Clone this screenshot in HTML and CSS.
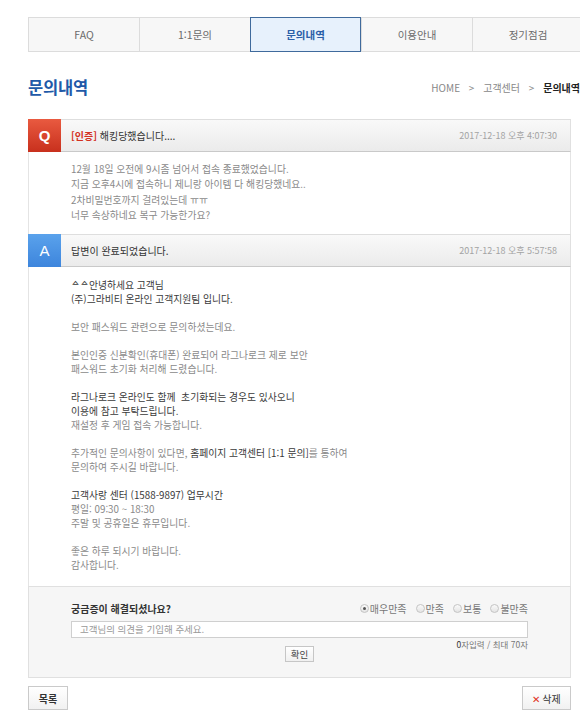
FILE: index.html
```
<!DOCTYPE html>
<html lang="ko">
<head>
<meta charset="utf-8">
<link rel="stylesheet" href="styles.css">
</head>
<body>
<div class="wrap">
  <ul class="tabs">
    <li class="tab">FAQ</li>
    <li class="tab">1:1문의</li>
    <li class="tab active">문의내역</li>
    <li class="tab">이용안내</li>
    <li class="tab">정기점검</li>
  </ul>

  <div class="title-row">
    <h2 class="title">문의내역</h2>
    <div class="crumb">HOME <span class="gt">&gt;</span> 고객센터 <span class="gt">&gt;</span> <b>문의내역</b></div>
  </div>

  <div class="board">
    <div class="head">
      <span class="badge q">Q</span>
      <span class="subject"><b class="tag">[인증]</b> 해킹당했습니다....</span>
      <span class="date">2017-12-18 오후 4:07:30</span>
    </div>
    <div class="body qbody">
      <p>12월 18일 오전에 9시좀 넘어서 접속 종료했었습니다.</p>
      <p>지금 오후4시에 접속하니 제니랑 아이템 다 해킹당했네요..</p>
      <p>2차비밀번호까지 걸려있는데 ㅠㅠ</p>
      <p>너무 속상하네요 복구 가능한가요?</p>
    </div>

    <div class="head">
      <span class="badge a">A</span>
      <span class="subject">답변이 완료되었습니다.</span>
      <span class="date">2017-12-18 오후 5:57:58</span>
    </div>
    <div class="body abody">
      <p class="dk">ᅀᅀ안녕하세요 고객님</p>
      <p class="dk">(주)그라비티 온라인 고객지원팀 입니다.</p>
      <p>&nbsp;</p>
      <p>보안 패스워드 관련으로 문의하셨는데요.</p>
      <p>&nbsp;</p>
      <p>본인인증 신분확인(휴대폰) 완료되어 라그나로크 제로 보안</p>
      <p>패스워드 초기화 처리해 드렸습니다.</p>
      <p>&nbsp;</p>
      <p class="dk">라그나로크 온라인도 함께&nbsp; 초기화되는 경우도 있사오니</p>
      <p class="dk">이용에 참고 부탁드립니다.</p>
      <p>재설정 후 게임 접속 가능합니다.</p>
      <p>&nbsp;</p>
      <p>추가적인 문의사항이 있다면, <span class="dk">홈페이지 고객센터 [1:1 문의]</span>를 통하여</p>
      <p>문의하여 주시길 바랍니다.</p>
      <p>&nbsp;</p>
      <p class="dk">고객사랑 센터 (1588-9897) 업무시간</p>
      <p>평일: 09:30 ~ 18:30</p>
      <p>주말 및 공휴일은 휴무입니다.</p>
      <p>&nbsp;</p>
      <p>좋은 하루 되시기 바랍니다.</p>
      <p>감사합니다.</p>
    </div>

    <div class="feedback">
      <div class="fb-top">
        <b class="question">궁금증이 해결되셨나요?</b>
        <div class="rates">
          <label class="rate"><span class="radio on"></span>매우만족</label>
          <label class="rate"><span class="radio"></span>만족</label>
          <label class="rate"><span class="radio"></span>보통</label>
          <label class="rate"><span class="radio"></span>불만족</label>
        </div>
      </div>
      <div class="input">고객님의 의견을 기입해 주세요.</div>
      <div class="counter">0자입력 / 최대 70자</div>
      <div class="ok-row"><span class="btn-ok">확인</span></div>
    </div>
  </div>

  <div class="actions">
    <span class="btn">목록</span>
    <span class="btn del"><span class="x">✕</span> 삭제</span>
  </div>
</div>
</body>
</html>
```

FILE: styles.css
```
html, body {
  margin: 0;
  padding: 0;
  background: #fff;
  overflow: hidden;
}
body {
  font-family: "Noto Sans CJK KR", "Noto Sans", sans-serif;
  font-size: 9.8px;
  color: #888;
}
.wrap {
  padding-left: 28px;
  width: 555px;
}
.tabs {
  list-style: none;
  margin: 17px 0 0;
  padding: 0;
  display: grid;
  grid-template-columns: repeat(5, 111px);
  height: 35px;
  box-sizing: border-box;
  border-top: 1px solid #dcdcdc;
  border-bottom: 1px solid #dcdcdc;
  background: #f7f7f7;
}
.tab {
  display: flex;
  align-items: center;
  justify-content: center;
  border-left: 1px solid #dcdcdc;
  color: #6a6a6a;
  font-size: 10.5px;
}
.tab.active {
  background: #e7f1fc;
  border: 1px solid #3f6a9c;
  margin: -1px 0;
  color: #2b5fa8;
  font-weight: bold;
}
.title-row {
  width: 552px;
  display: flex;
  justify-content: space-between;
  align-items: center;
  margin-top: 25px;
  height: 20px;
}
.title {
  margin: 0;
  font-size: 16.5px;
  font-weight: bold;
  color: #2159a8;
  letter-spacing: -0.2px;
}
.crumb {
  font-size: 10px;
  color: #888;
  white-space: nowrap;
}
.crumb .gt { margin: 0 6px; }
.crumb b { color: #222; }
.board {
  width: 543px;
  margin-top: 22px;
}
.head {
  display: flex;
  align-items: center;
  height: 33px;
  box-sizing: border-box;
  border-top: 1px solid #dedede;
  border-bottom: 1px solid #c9c9c9;
  border-right: 1px solid #e0e0e0;
  background: linear-gradient(#f9f9f9, #ebebeb);
}
.badge {
  width: 33px;
  height: 33px;
  margin: -1px 0;
  display: flex;
  align-items: center;
  justify-content: center;
  color: #fff;
  font-family: "Liberation Sans", Arial, sans-serif;
  font-weight: bold;
  font-size: 15px;
}
.badge.q { background: linear-gradient(#e95a40, #c8301d); }
.badge.a { background: linear-gradient(#5aa2ec, #3d85dc); font-weight: normal; }
.subject {
  flex: 1;
  margin-left: 10px;
  color: #333;
  font-size: 10px;
}
.subject .tag { color: #d3311f; }
.date {
  color: #a3a3a3;
  font-size: 9px;
  margin-right: 13px;
}
.body {
  border-left: 1px solid #e4e4e4;
  border-right: 1px solid #e4e4e4;
  padding-left: 42px;
}
.body p { margin: 0; white-space: nowrap; }
.qbody {
  padding-top: 10px;
  padding-bottom: 11px;
  line-height: 15.3px;
  color: #8a8a8a;
}
.abody {
  padding-top: 11px;
  padding-bottom: 14px;
  line-height: 14px;
  color: #8a8a8a;
}
.abody .dk { color: #3a3a3a; }
.feedback {
  background: #f6f6f6;
  border: 1px solid #e0e0e0;
  padding: 14px 42px 15px 42px;
}
.fb-top {
  display: flex;
  justify-content: space-between;
  align-items: center;
  height: 14px;
}
.question { color: #333; font-size: 10px; }
.rates { display: flex; gap: 9px; }
.rate {
  display: flex;
  align-items: center;
  color: #777;
  font-size: 10px;
}
.radio {
  width: 9px;
  height: 9px;
  box-sizing: border-box;
  border: 1px solid #c4c4c4;
  border-radius: 50%;
  background: linear-gradient(#fafafa, #e4e4e4);
  margin-right: 1px;
  position: relative;
}
.radio.on::after {
  content: "";
  position: absolute;
  left: 2px;
  top: 2px;
  width: 3px;
  height: 3px;
  border-radius: 50%;
  background: #555;
}
.input {
  margin-top: 6px;
  height: 17px;
  box-sizing: border-box;
  border: 1px solid #cfcfcf;
  background: #fff;
  padding-left: 8px;
  line-height: 15px;
  color: #999;
  font-size: 9.5px;
}
.counter {
  text-align: right;
  font-size: 8.5px;
  color: #777;
  height: 10px;
  line-height: 10px;
  margin-top: 1px;
}
.counter::first-letter { color: #333; }
.ok-row {
  display: flex;
  justify-content: center;
  margin-top: -3px;
}
.btn-ok {
  display: flex;
  align-items: center;
  justify-content: center;
  width: 29px;
  height: 16px;
  box-sizing: border-box;
  border: 1px solid #c6c6c6;
  background: linear-gradient(#fff, #f0f0f0);
  color: #444;
  font-size: 9.5px;
}
.actions {
  width: 543px;
  display: flex;
  justify-content: space-between;
  margin-top: 8px;
}
.btn {
  display: flex;
  align-items: center;
  justify-content: center;
  height: 24px;
  width: 40px;
  box-sizing: border-box;
  border: 1px solid #cacaca;
  background: linear-gradient(#fff, #f1f1f1);
  color: #333;
  font-size: 10px;
  font-weight: bold;
}
.btn.del { width: 49px; font-weight: normal; gap: 2px; }
.btn .x { color: #e03222; font-size: 10px; }
```
